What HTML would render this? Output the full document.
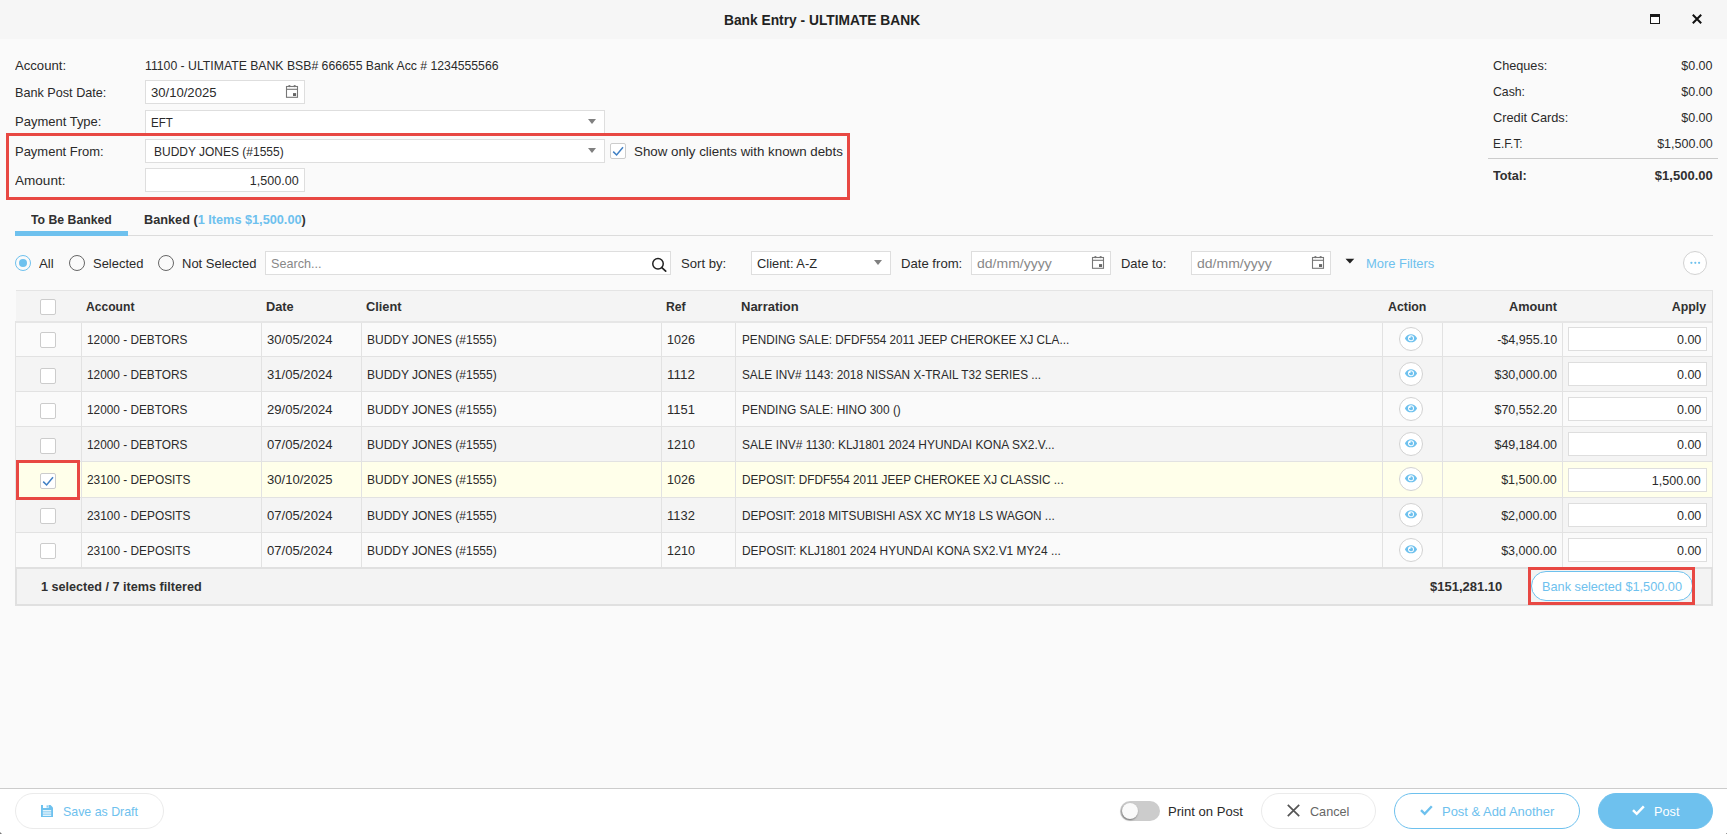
<!DOCTYPE html><html lang="en"><head><meta charset="utf-8"><title>Bank Entry - ULTIMATE BANK</title>
<style>*{box-sizing:border-box;margin:0;padding:0}
html,body{width:1727px;height:834px;overflow:hidden}
body{position:relative;background:#fafafa;font-family:"Liberation Sans",sans-serif;font-size:13px;color:#2a2a2a}
.abs{position:absolute}
.t{position:absolute;white-space:nowrap;height:20px;line-height:20px;transform-origin:0 50%}
.b{font-weight:bold;color:#303030}
.blue{color:#6ec1ee}
#tb{position:absolute;left:0;top:0;width:1727px;height:39px;background:#f6f6f6}
.title{font-weight:bold;font-size:15px;color:#222;}
.inp{position:absolute;height:24px;background:#fff;border:1px solid #dedede}
.it{position:absolute;top:0;line-height:24px;white-space:nowrap;transform-origin:0 50%}
.ph{color:#888}
.cal{position:absolute;right:5px;top:3px}
.arr{position:absolute;right:8px;top:8px;width:0;height:0;border-left:4px solid transparent;border-right:4px solid transparent;border-top:5.5px solid #808080}
.cb{position:absolute;width:16px;height:16px;background:#fff;border:1px solid #ccc;border-radius:2px}
.red{position:absolute;border:3px solid #e84843}
.rd{position:absolute;width:16px;height:16px;border-radius:50%;border:1px solid #666}
.rd.on{border-color:#6ec1ee}
.rd.on i{position:absolute;left:3px;top:3px;width:8px;height:8px;border-radius:50%;background:#6ec1ee}
.circ{position:absolute;width:24px;height:24px;border-radius:50%;background:#fff;border:1px solid #d2d2d2}
.circ svg{position:absolute;left:0;top:0}
#grid{position:absolute;left:15px;top:290px;width:1698px;height:316px;border:1px solid #e4e4e4;background:#f4f4f4}
.hd{position:absolute;left:0;top:30px;width:1696px;height:2px;background:#e6e6e6}
.row{position:absolute;left:16px;width:1696px}
.hl{position:absolute;left:16px;width:1696px;height:1px;background:#e2e2e2}
.vl{position:absolute;top:323px;height:245px;width:1px;background:#e2e2e2}
#gf{position:absolute;left:15px;top:567px;width:1698px;height:39px;background:#f3f3f3;border:2px solid #e0e0e0}
.pill{position:absolute;border:1px solid #6ec1ee;border-radius:18px;background:#fff;text-align:center;white-space:nowrap}
.bs{color:#6ec1ee;}
#bb{position:absolute;left:0;top:788px;width:1727px;height:46px;background:#fff;border-top:1px solid #ccc}
.btn{font-size:13px}
.cn{color:#666}
.tog{position:absolute;width:40px;height:20px;border-radius:10px;background:#ccc}
.tog i{position:absolute;left:2px;top:2px;width:16px;height:16px;border-radius:50%;background:#fafafa;box-shadow:-0.5px 1px 2px rgba(0,0,0,.45)}
</style></head><body>
<div id="tb"></div>
<div class="t title" style="left:723.8px;top:10px;transform:scaleX(0.9181);">Bank Entry - ULTIMATE BANK</div>
<svg class="abs" style="left:1650px;top:14px" width="10" height="10" viewBox="0 0 10 10"><rect x="0.5" y="0.5" width="9" height="9" fill="#fff" stroke="#1a1a1a" stroke-width="1"/><rect x="0" y="0" width="10" height="3" fill="#1a1a1a"/><rect x="0" y="9" width="10" height="1" fill="#1a1a1a"/></svg>
<svg class="abs" style="left:1692px;top:14px" width="10" height="10" viewBox="0 0 10 10"><path d="M0.8 0.8 L9.2 9.2 M9.2 0.8 L0.8 9.2" stroke="#111" stroke-width="2" fill="none"/></svg>
<div class="t lbl" style="left:15px;top:55.5px;transform:scaleX(1.0093);">Account:</div>
<div class="t lbl" style="left:15px;top:83.25px;transform:scaleX(0.9727);">Bank Post Date:</div>
<div class="t lbl" style="left:15px;top:111.75px;transform:scaleX(0.9996);">Payment Type:</div>
<div class="t lbl" style="left:15px;top:142px;transform:scaleX(0.9982);">Payment From:</div>
<div class="t lbl" style="left:15px;top:171.25px;transform:scaleX(1.0426);">Amount:</div>
<div class="t acc" style="left:145px;top:55.5px;transform:scaleX(0.9414);">11100 - ULTIMATE BANK BSB# 666655 Bank Acc # 1234555566</div>
<div class="inp" style="left:145px;top:80px;width:160px"><span class="it " style="left:5px;transform:scaleX(1.0060)">30/10/2025</span><svg class="cal" width="14" height="14" viewBox="0 0 14 14"><rect x="1.5" y="2.5" width="11" height="10.8" fill="none" stroke="#777" stroke-width="1.1"/><path d="M1.5 5.3 H12.5" stroke="#777" stroke-width="1.1"/><circle cx="4.4" cy="2.1" r="1.15" fill="#777"/><circle cx="9.7" cy="2.1" r="1.15" fill="#777"/><rect x="8" y="9.1" width="3.1" height="2.9" fill="#666"/></svg></div>
<div class="inp" style="left:145px;top:110px;width:460px"><span class="it " style="left:5px;transform:scaleX(0.8880)">EFT</span><i class="arr"></i></div>
<div class="inp" style="left:145px;top:139px;width:460px"><span class="it " style="left:8px;transform:scaleX(0.9218)">BUDDY JONES (#1555)</span><i class="arr"></i></div>
<div class="inp" style="left:145px;top:168px;width:160px"><span class="it " style="right:5px;transform-origin:100% 50%;transform:scaleX(0.9630)">1,500.00</span></div>
<div class="cb" style="left:610px;top:143px"><svg width="14" height="14" viewBox="0 0 14 14" style="position:absolute;left:0;top:0"><path d="M2.2 7.6 L5.6 11 L12 3.2" fill="none" stroke="#3f7fc4" stroke-width="1.5"/></svg></div>
<div class="t sh" style="left:634px;top:142px;transform:scaleX(1.0251);">Show only clients with known debts</div>
<div class="red" style="left:6px;top:133px;width:844px;height:67px"></div>
<div class="t lbl" style="left:1493px;top:55.5px;transform:scaleX(0.9747);">Cheques:</div>
<div class="t val" style="right:14px;transform-origin:100% 50%;top:55.5px;transform:scaleX(0.9626);">$0.00</div>
<div class="t lbl" style="left:1493px;top:81.5px;transform:scaleX(0.9430);">Cash:</div>
<div class="t val" style="right:14px;transform-origin:100% 50%;top:81.5px;transform:scaleX(0.9626);">$0.00</div>
<div class="t lbl" style="left:1493px;top:107.5px;transform:scaleX(0.9833);">Credit Cards:</div>
<div class="t val" style="right:14px;transform-origin:100% 50%;top:107.5px;transform:scaleX(0.9626);">$0.00</div>
<div class="t lbl" style="left:1493px;top:133.5px;transform:scaleX(0.9101);">E.F.T:</div>
<div class="t val" style="right:14px;transform-origin:100% 50%;top:133.5px;transform:scaleX(0.9627);">$1,500.00</div>
<div class="abs" style="left:1488px;top:158px;width:230px;height:1px;background:#ccc"></div>
<div class="t b" style="left:1493px;top:165.5px;transform:scaleX(0.9778);">Total:</div>
<div class="t b" style="right:14px;transform-origin:100% 50%;top:165.5px;transform:scaleX(1.0024);">$1,500.00</div>
<div class="t b tab1" style="left:31px;top:209.5px;transform:scaleX(0.9426);">To Be Banked</div>
<div class="t b tab2" style="left:144px;top:209.5px;transform:scaleX(0.9774);">Banked (<span class="blue">1 Items $1,500.00</span>)</div>
<div class="abs" style="left:15px;top:235px;width:1698px;height:1px;background:#dcdcdc"></div>
<div class="abs" style="left:15px;top:231px;width:113px;height:5px;background:#6ec1ee"></div>
<div class="rd on" style="left:15px;top:255px"><i></i></div>
<div class="t f" style="left:39px;top:253.5px;transform:scaleX(1.0205);">All</div>
<div class="rd" style="left:69px;top:255px"></div>
<div class="t f" style="left:93px;top:253.5px;transform:scaleX(0.9969);">Selected</div>
<div class="rd" style="left:158px;top:255px"></div>
<div class="t f" style="left:182px;top:253.5px;transform:scaleX(0.9992);">Not Selected</div>
<div class="inp" style="left:265px;top:251px;width:406px"><span class="it ph" style="left:5px;transform:scaleX(0.9700)">Search...</span><svg style="position:absolute;left:385px;top:5px" width="16" height="16" viewBox="0 0 16 16"><circle cx="7" cy="6.8" r="5.25" fill="none" stroke="#222" stroke-width="1.5"/><path d="M10.8 10.6 L14.7 14.2" stroke="#222" stroke-width="1.7" stroke-linecap="round"/></svg></div>
<div class="t f" style="left:681px;top:253.5px;transform:scaleX(1.0084);">Sort by:</div>
<div class="inp" style="left:751px;top:251px;width:140px"><span class="it " style="left:5px;transform:scaleX(0.9894)">Client: A-Z</span><i class="arr"></i></div>
<div class="t f" style="left:901px;top:253.5px;transform:scaleX(1.0093);">Date from:</div>
<div class="inp" style="left:971px;top:251px;width:140px"><span class="it ph" style="left:5px;transform:scaleX(1.0775)">dd/mm/yyyy</span><svg class="cal" width="14" height="14" viewBox="0 0 14 14"><rect x="1.5" y="2.5" width="11" height="10.8" fill="none" stroke="#777" stroke-width="1.1"/><path d="M1.5 5.3 H12.5" stroke="#777" stroke-width="1.1"/><circle cx="4.4" cy="2.1" r="1.15" fill="#777"/><circle cx="9.7" cy="2.1" r="1.15" fill="#777"/><rect x="8" y="9.1" width="3.1" height="2.9" fill="#666"/></svg></div>
<div class="t f" style="left:1121px;top:253.5px;transform:scaleX(0.9966);">Date to:</div>
<div class="inp" style="left:1191px;top:251px;width:140px"><span class="it ph" style="left:5px;transform:scaleX(1.0775)">dd/mm/yyyy</span><svg class="cal" width="14" height="14" viewBox="0 0 14 14"><rect x="1.5" y="2.5" width="11" height="10.8" fill="none" stroke="#777" stroke-width="1.1"/><path d="M1.5 5.3 H12.5" stroke="#777" stroke-width="1.1"/><circle cx="4.4" cy="2.1" r="1.15" fill="#777"/><circle cx="9.7" cy="2.1" r="1.15" fill="#777"/><rect x="8" y="9.1" width="3.1" height="2.9" fill="#666"/></svg></div>
<svg class="abs" style="left:1345px;top:258px" width="10" height="7" viewBox="0 0 10 7"><path d="M0.5 0.7 H9.3 L4.9 5.5 Z" fill="#222"/></svg>
<div class="t blue mf" style="left:1366px;top:253.5px;transform:scaleX(0.9957);">More Filters</div>
<div class="circ" style="left:1683px;top:251px"><svg width="22" height="22" viewBox="0 0 22 22"><circle cx="7.4" cy="10.8" r="1.1" fill="#6ec1ee"/><circle cx="11.3" cy="10.8" r="1.1" fill="#6ec1ee"/><circle cx="15.1" cy="10.8" r="1.1" fill="#6ec1ee"/></svg></div>
<div id="grid"><div class="hd"></div></div>
<div class="abs" style="left:15px;top:290px;width:1px;height:31px;background:#fafafa"></div>
<div class="cb" style="left:40px;top:299px"></div>
<div class="t b th" style="left:86px;top:296.5px;transform:scaleX(0.9315);">Account</div>
<div class="t b th" style="left:266px;top:296.5px;transform:scaleX(0.9823);">Date</div>
<div class="t b th" style="left:366px;top:296.5px;transform:scaleX(0.9836);">Client</div>
<div class="t b th" style="left:666px;top:296.5px;transform:scaleX(0.9374);">Ref</div>
<div class="t b th" style="left:741px;top:296.5px;transform:scaleX(0.9992);">Narration</div>
<div class="t b th" style="left:1387.5px;top:296.5px;transform:scaleX(0.9490);">Action</div>
<div class="t b th" style="right:169.5px;transform-origin:100% 50%;top:296.5px;transform:scaleX(0.9771);">Amount</div>
<div class="t b th" style="right:20.5px;transform-origin:100% 50%;top:296.5px;transform:scaleX(0.9503);">Apply</div>
<div class="row" style="top:323px;height:33px;background:#fafafa"></div>
<div class="cb" style="left:40px;top:332px"></div>
<div class="t c c0" style="left:87px;top:330px;transform:scaleX(0.9098);">12000 - DEBTORS</div>
<div class="t c c1" style="left:267px;top:330px;transform:scaleX(1.0060);">30/05/2024</div>
<div class="t c c2" style="left:367px;top:330px;transform:scaleX(0.9218);">BUDDY JONES (#1555)</div>
<div class="t c c3" style="left:667px;top:330px;transform:scaleX(0.9627);">1026</div>
<div class="t c c4" style="left:741.5px;top:330px;transform:scaleX(0.9034);">PENDING SALE: DFDF554 2011 JEEP CHEROKEE XJ CLA...</div>
<div class="circ" style="left:1399px;top:327px"><svg width="12" height="10.67" viewBox="0 0 576 512" style="left:5.1px;top:5.1px"><path fill="#6ec1ee" d="M572.52 241.4C518.29 135.59 410.93 64 288 64S57.68 135.64 3.48 241.41a32.35 32.35 0 0 0 0 29.19C57.71 376.41 165.07 448 288 448s230.32-71.64 284.52-177.41a32.35 32.35 0 0 0 0-29.19zM288 400a144 144 0 1 1 144-144 143.93 143.93 0 0 1-144 144zm0-240a95.31 95.31 0 0 0-25.31 3.79 47.85 47.85 0 0 1-66.9 66.9A95.78 95.78 0 1 0 288 160z"/></svg></div>
<div class="t c c5" style="right:170px;transform-origin:100% 50%;top:330px;transform:scaleX(0.9658);">-$4,955.10</div>
<div class="inp ap" style="left:1568px;top:327px;width:139px"><span class="it " style="right:5px;transform-origin:100% 50%;transform:scaleX(0.9630)">0.00</span></div>
<div class="row" style="top:357px;height:34px;background:#f4f4f4"></div>
<div class="cb" style="left:40px;top:368px"></div>
<div class="t c c0" style="left:87px;top:365px;transform:scaleX(0.9098);">12000 - DEBTORS</div>
<div class="t c c1" style="left:267px;top:365px;transform:scaleX(1.0060);">31/05/2024</div>
<div class="t c c2" style="left:367px;top:365px;transform:scaleX(0.9218);">BUDDY JONES (#1555)</div>
<div class="t c c3" style="left:667px;top:365px;transform:scaleX(1.0312);">1112</div>
<div class="t c c4" style="left:741.5px;top:365px;transform:scaleX(0.9064);">SALE INV# 1143: 2018 NISSAN X-TRAIL T32 SERIES ...</div>
<div class="circ" style="left:1399px;top:362px"><svg width="12" height="10.67" viewBox="0 0 576 512" style="left:5.1px;top:5.1px"><path fill="#6ec1ee" d="M572.52 241.4C518.29 135.59 410.93 64 288 64S57.68 135.64 3.48 241.41a32.35 32.35 0 0 0 0 29.19C57.71 376.41 165.07 448 288 448s230.32-71.64 284.52-177.41a32.35 32.35 0 0 0 0-29.19zM288 400a144 144 0 1 1 144-144 143.93 143.93 0 0 1-144 144zm0-240a95.31 95.31 0 0 0-25.31 3.79 47.85 47.85 0 0 1-66.9 66.9A95.78 95.78 0 1 0 288 160z"/></svg></div>
<div class="t c c5" style="right:170px;transform-origin:100% 50%;top:365px;transform:scaleX(0.9625);">$30,000.00</div>
<div class="inp ap" style="left:1568px;top:362px;width:139px"><span class="it " style="right:5px;transform-origin:100% 50%;transform:scaleX(0.9630)">0.00</span></div>
<div class="row" style="top:392px;height:34px;background:#fafafa"></div>
<div class="cb" style="left:40px;top:403px"></div>
<div class="t c c0" style="left:87px;top:400px;transform:scaleX(0.9098);">12000 - DEBTORS</div>
<div class="t c c1" style="left:267px;top:400px;transform:scaleX(1.0060);">29/05/2024</div>
<div class="t c c2" style="left:367px;top:400px;transform:scaleX(0.9218);">BUDDY JONES (#1555)</div>
<div class="t c c3" style="left:667px;top:400px;transform:scaleX(0.9955);">1151</div>
<div class="t c c4" style="left:741.5px;top:400px;transform:scaleX(0.9160);">PENDING SALE: HINO 300 ()</div>
<div class="circ" style="left:1399px;top:397px"><svg width="12" height="10.67" viewBox="0 0 576 512" style="left:5.1px;top:5.1px"><path fill="#6ec1ee" d="M572.52 241.4C518.29 135.59 410.93 64 288 64S57.68 135.64 3.48 241.41a32.35 32.35 0 0 0 0 29.19C57.71 376.41 165.07 448 288 448s230.32-71.64 284.52-177.41a32.35 32.35 0 0 0 0-29.19zM288 400a144 144 0 1 1 144-144 143.93 143.93 0 0 1-144 144zm0-240a95.31 95.31 0 0 0-25.31 3.79 47.85 47.85 0 0 1-66.9 66.9A95.78 95.78 0 1 0 288 160z"/></svg></div>
<div class="t c c5" style="right:170px;transform-origin:100% 50%;top:400px;transform:scaleX(0.9625);">$70,552.20</div>
<div class="inp ap" style="left:1568px;top:397px;width:139px"><span class="it " style="right:5px;transform-origin:100% 50%;transform:scaleX(0.9630)">0.00</span></div>
<div class="row" style="top:427px;height:34px;background:#f4f4f4"></div>
<div class="cb" style="left:40px;top:438px"></div>
<div class="t c c0" style="left:87px;top:435px;transform:scaleX(0.9098);">12000 - DEBTORS</div>
<div class="t c c1" style="left:267px;top:435px;transform:scaleX(1.0060);">07/05/2024</div>
<div class="t c c2" style="left:367px;top:435px;transform:scaleX(0.9218);">BUDDY JONES (#1555)</div>
<div class="t c c3" style="left:667px;top:435px;transform:scaleX(0.9627);">1210</div>
<div class="t c c4" style="left:741.5px;top:435px;transform:scaleX(0.9184);">SALE INV# 1130: KLJ1801 2024 HYUNDAI KONA SX2.V...</div>
<div class="circ" style="left:1399px;top:432px"><svg width="12" height="10.67" viewBox="0 0 576 512" style="left:5.1px;top:5.1px"><path fill="#6ec1ee" d="M572.52 241.4C518.29 135.59 410.93 64 288 64S57.68 135.64 3.48 241.41a32.35 32.35 0 0 0 0 29.19C57.71 376.41 165.07 448 288 448s230.32-71.64 284.52-177.41a32.35 32.35 0 0 0 0-29.19zM288 400a144 144 0 1 1 144-144 143.93 143.93 0 0 1-144 144zm0-240a95.31 95.31 0 0 0-25.31 3.79 47.85 47.85 0 0 1-66.9 66.9A95.78 95.78 0 1 0 288 160z"/></svg></div>
<div class="t c c5" style="right:170px;transform-origin:100% 50%;top:435px;transform:scaleX(0.9625);">$49,184.00</div>
<div class="inp ap" style="left:1568px;top:432px;width:139px"><span class="it " style="right:5px;transform-origin:100% 50%;transform:scaleX(0.9630)">0.00</span></div>
<div class="row" style="top:462px;height:35px;background:#ffffea"></div>
<div class="cb" style="left:40px;top:473px"><svg width="14" height="14" viewBox="0 0 14 14" style="position:absolute;left:0;top:0"><path d="M2.2 7.6 L5.6 11 L12 3.2" fill="none" stroke="#3f7fc4" stroke-width="1.5"/></svg></div>
<div class="t c c0" style="left:87px;top:470px;transform:scaleX(0.9127);">23100 - DEPOSITS</div>
<div class="t c c1" style="left:267px;top:470px;transform:scaleX(1.0060);">30/10/2025</div>
<div class="t c c2" style="left:367px;top:470px;transform:scaleX(0.9218);">BUDDY JONES (#1555)</div>
<div class="t c c3" style="left:667px;top:470px;transform:scaleX(0.9627);">1026</div>
<div class="t c c4" style="left:741.5px;top:470px;transform:scaleX(0.9043);">DEPOSIT: DFDF554 2011 JEEP CHEROKEE XJ CLASSIC ...</div>
<div class="circ" style="left:1399px;top:467px"><svg width="12" height="10.67" viewBox="0 0 576 512" style="left:5.1px;top:5.1px"><path fill="#6ec1ee" d="M572.52 241.4C518.29 135.59 410.93 64 288 64S57.68 135.64 3.48 241.41a32.35 32.35 0 0 0 0 29.19C57.71 376.41 165.07 448 288 448s230.32-71.64 284.52-177.41a32.35 32.35 0 0 0 0-29.19zM288 400a144 144 0 1 1 144-144 143.93 143.93 0 0 1-144 144zm0-240a95.31 95.31 0 0 0-25.31 3.79 47.85 47.85 0 0 1-66.9 66.9A95.78 95.78 0 1 0 288 160z"/></svg></div>
<div class="t c c5" style="right:170px;transform-origin:100% 50%;top:470px;transform:scaleX(0.9627);">$1,500.00</div>
<div class="inp ap" style="left:1568px;top:468px;width:139px"><span class="it " style="right:5px;transform-origin:100% 50%;transform:scaleX(0.9630)">1,500.00</span></div>
<div class="row" style="top:498px;height:34px;background:#f4f4f4"></div>
<div class="cb" style="left:40px;top:508px"></div>
<div class="t c c0" style="left:87px;top:506px;transform:scaleX(0.9127);">23100 - DEPOSITS</div>
<div class="t c c1" style="left:267px;top:506px;transform:scaleX(1.0060);">07/05/2024</div>
<div class="t c c2" style="left:367px;top:506px;transform:scaleX(0.9218);">BUDDY JONES (#1555)</div>
<div class="t c c3" style="left:667px;top:506px;transform:scaleX(0.9955);">1132</div>
<div class="t c c4" style="left:741.5px;top:506px;transform:scaleX(0.9048);">DEPOSIT: 2018 MITSUBISHI ASX XC MY18 LS WAGON ...</div>
<div class="circ" style="left:1399px;top:503px"><svg width="12" height="10.67" viewBox="0 0 576 512" style="left:5.1px;top:5.1px"><path fill="#6ec1ee" d="M572.52 241.4C518.29 135.59 410.93 64 288 64S57.68 135.64 3.48 241.41a32.35 32.35 0 0 0 0 29.19C57.71 376.41 165.07 448 288 448s230.32-71.64 284.52-177.41a32.35 32.35 0 0 0 0-29.19zM288 400a144 144 0 1 1 144-144 143.93 143.93 0 0 1-144 144zm0-240a95.31 95.31 0 0 0-25.31 3.79 47.85 47.85 0 0 1-66.9 66.9A95.78 95.78 0 1 0 288 160z"/></svg></div>
<div class="t c c5" style="right:170px;transform-origin:100% 50%;top:506px;transform:scaleX(0.9627);">$2,000.00</div>
<div class="inp ap" style="left:1568px;top:503px;width:139px"><span class="it " style="right:5px;transform-origin:100% 50%;transform:scaleX(0.9630)">0.00</span></div>
<div class="row" style="top:533px;height:34px;background:#fafafa"></div>
<div class="cb" style="left:40px;top:543px"></div>
<div class="t c c0" style="left:87px;top:541px;transform:scaleX(0.9127);">23100 - DEPOSITS</div>
<div class="t c c1" style="left:267px;top:541px;transform:scaleX(1.0060);">07/05/2024</div>
<div class="t c c2" style="left:367px;top:541px;transform:scaleX(0.9218);">BUDDY JONES (#1555)</div>
<div class="t c c3" style="left:667px;top:541px;transform:scaleX(0.9627);">1210</div>
<div class="t c c4" style="left:741.5px;top:541px;transform:scaleX(0.9154);">DEPOSIT: KLJ1801 2024 HYUNDAI KONA SX2.V1 MY24 ...</div>
<div class="circ" style="left:1399px;top:538px"><svg width="12" height="10.67" viewBox="0 0 576 512" style="left:5.1px;top:5.1px"><path fill="#6ec1ee" d="M572.52 241.4C518.29 135.59 410.93 64 288 64S57.68 135.64 3.48 241.41a32.35 32.35 0 0 0 0 29.19C57.71 376.41 165.07 448 288 448s230.32-71.64 284.52-177.41a32.35 32.35 0 0 0 0-29.19zM288 400a144 144 0 1 1 144-144 143.93 143.93 0 0 1-144 144zm0-240a95.31 95.31 0 0 0-25.31 3.79 47.85 47.85 0 0 1-66.9 66.9A95.78 95.78 0 1 0 288 160z"/></svg></div>
<div class="t c c5" style="right:170px;transform-origin:100% 50%;top:541px;transform:scaleX(0.9627);">$3,000.00</div>
<div class="inp ap" style="left:1568px;top:538px;width:139px"><span class="it " style="right:5px;transform-origin:100% 50%;transform:scaleX(0.9630)">0.00</span></div>
<div class="hl" style="top:356px"></div>
<div class="hl" style="top:391px"></div>
<div class="hl" style="top:426px"></div>
<div class="hl" style="top:461px"></div>
<div class="hl" style="top:497px"></div>
<div class="hl" style="top:532px"></div>
<div class="vl" style="left:81px"></div>
<div class="vl" style="left:261px"></div>
<div class="vl" style="left:361px"></div>
<div class="vl" style="left:661px"></div>
<div class="vl" style="left:735px"></div>
<div class="vl" style="left:1382px"></div>
<div class="vl" style="left:1442px"></div>
<div class="vl" style="left:1562px"></div>
<div id="gf"></div>
<div class="t b gft" style="left:41px;top:576.5px;transform:scaleX(0.9712);">1 selected / 7 items filtered</div>
<div class="t b" style="right:225px;transform-origin:100% 50%;top:576.5px;transform:scaleX(1.0006);">$151,281.10</div>
<div class="pill" style="left:1531px;top:571px;width:162px;height:30px"></div>
<div class="t blue" style="left:1541.5px;top:576.5px;transform:scaleX(0.9782);">Bank selected $1,500.00</div>
<div class="red" style="left:1528px;top:567px;width:167px;height:38px"></div>
<div class="red" style="left:16px;top:460px;width:64px;height:40px"></div>
<div id="bb"></div>
<div class="pill" style="left:15px;top:793px;width:149px;height:36px;border-color:#ebebeb"></div>
<svg class="abs" style="left:41px;top:805px" width="12" height="12" viewBox="0 0 12 12"><path d="M0 0 H9.5 L12 2.5 V12 H0 Z" fill="#6ec1ee"/><rect x="2" y="0" width="5.5" height="3" fill="#fff"/><rect x="5.6" y="0.4" width="1.2" height="2.2" fill="#6ec1ee"/><rect x="1.8" y="5.2" width="8.4" height="1.2" fill="#fff"/><rect x="1.8" y="7.4" width="8.4" height="1.2" fill="#fff"/><rect x="1.8" y="9.6" width="8.4" height="1.2" fill="#fff"/></svg>
<div class="t blue btn sd" style="left:62.6px;top:801.5px;transform:scaleX(0.9522);">Save as Draft</div>
<div class="tog" style="left:1120px;top:801px"><i></i></div>
<div class="t btn pp" style="left:1168px;top:801.5px;transform:scaleX(1.0067);">Print on Post</div>
<div class="pill" style="left:1261px;top:793px;width:115px;height:36px;border-color:#ebebeb"></div>
<svg class="abs" style="left:1287px;top:804.3px" width="13" height="13" viewBox="0 0 13 13"><path d="M0.8 0.8 L12.2 12.2 M12.2 0.8 L0.8 12.2" stroke="#555" stroke-width="1.7" fill="none"/></svg>
<div class="t btn cn" style="left:1310px;top:801.5px;transform:scaleX(0.9714);">Cancel</div>
<div class="pill" style="left:1394px;top:793px;width:186px;height:36px;border-color:#6ec1ee"></div>
<svg class="abs" style="left:1420px;top:805.4px" width="13" height="11" viewBox="0 0 13 11"><path d="M1 5.2 L4.7 8.8 L11.8 1.3" stroke="#6ec1ee" stroke-width="2.4" fill="none"/></svg>
<div class="t blue btn pa" style="left:1441.5px;top:801.5px;transform:scaleX(0.9960);">Post &amp; Add Another</div>
<div class="pill" style="left:1598px;top:793px;width:115px;height:36px;border-color:#6ec1ee;background:#6ec1ee"></div>
<svg class="abs" style="left:1632px;top:805.4px" width="13" height="11" viewBox="0 0 13 11"><path d="M1 5.2 L4.7 8.8 L11.8 1.3" stroke="#fff" stroke-width="2.5" fill="none"/></svg>
<div class="t btn po" style="left:1653.5px;top:801.5px;transform:scaleX(0.9790);color:#fff">Post</div>
<div class="abs" style="left:0;top:832px;width:0;height:0;border-left:2px solid #777;border-top:2px solid transparent"></div>
<div class="abs" style="left:1726px;top:833px;width:1px;height:1px;background:#999"></div>
</body></html>
